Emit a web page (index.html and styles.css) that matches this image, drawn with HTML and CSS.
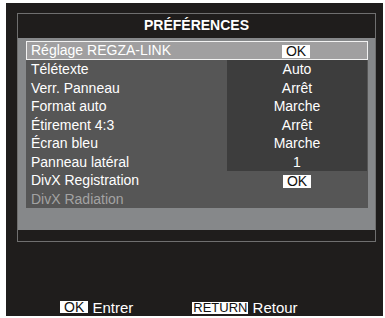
FILE: index.html
```html
<!DOCTYPE html>
<html lang="fr">

<head>
    <meta charset="UTF-8">
    <meta name="viewport" content="width=device-width, initial-scale=1.0">
    <title>Préférences</title>
    <link rel="stylesheet" href="styles.css">
</head>

<body>
    <div class="screen">
        <div class="panel">
            <div class="panel-title">PRÉFÉRENCES</div>

            <div class="panel-body">
                <div class="menu">
                    <div class="row selected">
                        <span class="label">Réglage REGZA-LINK</span>
                        <span class="value"><span class="key">OK</span></span>
                    </div>
                    <div class="row">
                        <span class="label">Télétexte</span>
                        <span class="value dark">Auto</span>
                    </div>
                    <div class="row">
                        <span class="label">Verr. Panneau</span>
                        <span class="value dark">Arrêt</span>
                    </div>
                    <div class="row">
                        <span class="label">Format auto</span>
                        <span class="value dark">Marche</span>
                    </div>
                    <div class="row">
                        <span class="label">Étirement 4:3</span>
                        <span class="value dark">Arrêt</span>
                    </div>
                    <div class="row">
                        <span class="label">Écran bleu</span>
                        <span class="value dark">Marche</span>
                    </div>
                    <div class="row">
                        <span class="label">Panneau latéral</span>
                        <span class="value dark">1</span>
                    </div>
                    <div class="row">
                        <span class="label">DivX Registration</span>
                        <span class="value"><span class="key">OK</span></span>
                    </div>
                    <div class="row disabled">
                        <span class="label">DivX Radiation</span>
                        <span class="value"></span>
                    </div>
                </div>
            </div>

            <div class="panel-foot"></div>
        </div>

        <div class="hints">
            <div class="hint"><span class="key">OK</span> Entrer</div>
            <div class="hint"><span class="key wide">RETURN</span> Retour</div>
        </div>
    </div>
</body>
</html>
```

FILE: styles.css
```css
body {
    margin: 0;
    padding: 3px 0 0 6px;
    background: #fff;
    font-family: "Liberation Sans", Arial, sans-serif;
    color: #fff;
}

.screen {
    width: 377px;
    height: 313px;
    background: #1f1d1c;
    padding-top: 10px;
    box-sizing: border-box;
    overflow: hidden;
}

.panel {
    width: 359px;
    margin-left: 11px;
    border: 1px solid #6f6f6f;
    box-sizing: border-box;
}

.panel-title {
    height: 24px;
    line-height: 22px;
    text-align: center;
    font-size: 14px;
    font-weight: bold;
    background: #1f1d1c;
}

.panel-body {
    height: 192px;
    background: #86888a;
    padding: 3px 7px 0 8px;
    box-sizing: border-box;
}

.menu {
    background: #565656;
    height: 167px;
    font-size: 14px;
}

.row {
    display: grid;
    grid-template-columns: 1fr 140px 1px;
    height: 18.5px;
    line-height: 18.5px;
}

.row .label {
    padding-left: 5px;
    white-space: nowrap;
}

.row .value {
    text-align: center;
}

.row .value.dark {
    background: #3d3d3d;
}

/* ligne active */
.row.selected {
    height: 19px;
    background: #a09fa0;
    border: 1px solid #f2f2f2;
    box-sizing: border-box;
    line-height: 17px;
}

.row.selected .label {
    padding-left: 4px;
}

.row.disabled {
    color: #a3a3a3;
}

.key {
    display: inline-block;
    background: #fff;
    color: #111;
    font-size: 14px;
    line-height: 13px;
    padding: 0 4px;
    vertical-align: middle;
}

.panel-foot {
    height: 11px;
    background: #1f1d1c;
}

.hints {
    display: flex;
    gap: 59px;
    margin: 58px 0 0 54px;
    font-size: 15px;
    line-height: 16px;
}

.hint .key {
    font-size: 14px;
    line-height: 12px;
    vertical-align: 1px;
}

.hint .key.wide {
    font-size: 13px;
    padding: 0 1px;
}
```
